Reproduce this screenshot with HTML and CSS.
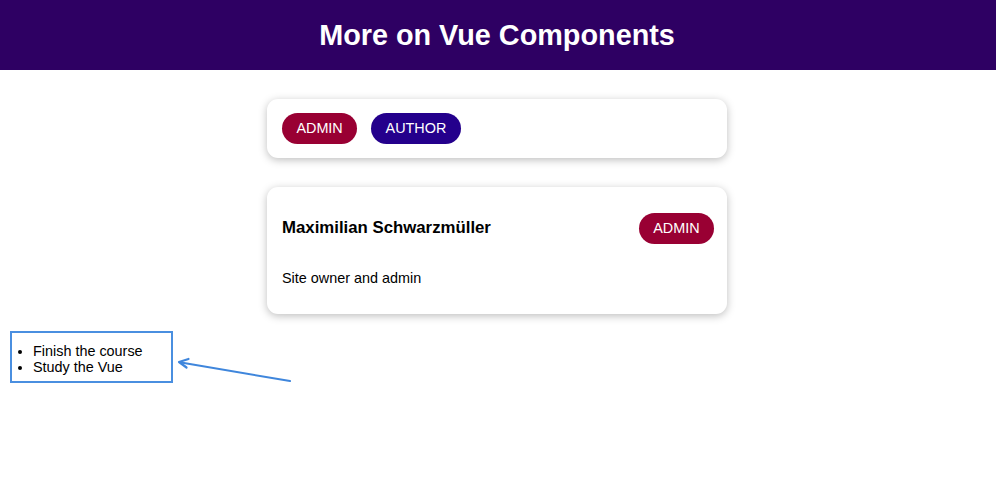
FILE: index.html
```html
<!DOCTYPE html>
<html lang="en">
<head>
<meta charset="utf-8">
<title>More on Vue Components</title>
<link rel="stylesheet" href="styles.css">
</head>
<body>
  <header class="site-header">
    <h1 class="site-title">More on Vue Components</h1>
  </header>
  <main class="content">
    <section class="card">
      <div class="badge-row">
        <span class="badge badge-admin">ADMIN</span>
        <span class="badge badge-author">AUTHOR</span>
      </div>
    </section>
    <section class="card info-card">
      <div class="info-header">
        <h3 class="info-name">Maximilian Schwarzmüller</h3>
        <span class="badge badge-admin">ADMIN</span>
      </div>
      <p class="info-text">Site owner and admin</p>
    </section>
  </main>
  <div class="goals">
    <ul class="goal-list">
      <li>Finish the course</li>
      <li>Study the Vue</li>
    </ul>
  </div>
  <svg class="arrow" width="996" height="494" viewBox="0 0 996 494">
    <line x1="290" y1="381" x2="181" y2="362.5" stroke="#3f86dc" stroke-width="2" stroke-linecap="round"/>
    <path d="M188.5 359 L179 362 L186.5 367.5" fill="none" stroke="#3f86dc" stroke-width="2.2" stroke-linecap="round" stroke-linejoin="round"/>
  </svg>
</body>
</html>
```
FILE: styles.css
```css
* {
  box-sizing: border-box;
}

html, body {
  margin: 0;
  padding: 0;
  background: #ffffff;
}

body {
  font-family: "Liberation Sans", Arial, sans-serif;
  font-size: 14.4px;
  color: #000000;
  position: relative;
  min-height: 494px;
}

.site-header {
  height: 70px;
  background: #2e0063;
  display: flex;
  align-items: center;
  justify-content: center;
}

.site-title {
  margin: 0 2px 0 0;
  color: #ffffff;
  font-size: 28.8px;
  font-weight: 700;
}

.content {
  display: flex;
  flex-direction: column;
  align-items: center;
  gap: 29px;
  padding-top: 29px;
  padding-right: 2px;
}

.card {
  width: 460px;
  background: #ffffff;
  border-radius: 11px;
  box-shadow: 0 2px 8px rgba(0, 0, 0, 0.26);
  padding: 14px 15px;
}

.badge-row {
  display: flex;
  gap: 14px;
}

.badge {
  display: inline-block;
  color: #ffffff;
  font-size: 14.4px;
  line-height: 16.6px;
  padding: 7.2px 14.4px;
  border-radius: 20px;
}

.badge-admin {
  background: #990033;
}

.badge-author {
  background: #24008c;
}

.info-card {
  padding: 26px 13px 27px 15px;
}

.info-header {
  display: flex;
  align-items: center;
  justify-content: space-between;
}

.info-name {
  margin: 0;
  font-size: 16.8px;
  font-weight: 700;
}

.info-text {
  margin: 26px 0 0;
  line-height: 16.6px;
}

.goals {
  margin: 17px 0 0 10px;
  width: 163px;
  height: 52px;
  border: 2px solid #4a8fe0;
  padding: 10px 0 0;
}

.goal-list {
  margin: 0;
  padding-left: 21px;
  line-height: 16px;
}

.arrow {
  position: absolute;
  left: 0;
  top: 0;
  pointer-events: none;
}
```
